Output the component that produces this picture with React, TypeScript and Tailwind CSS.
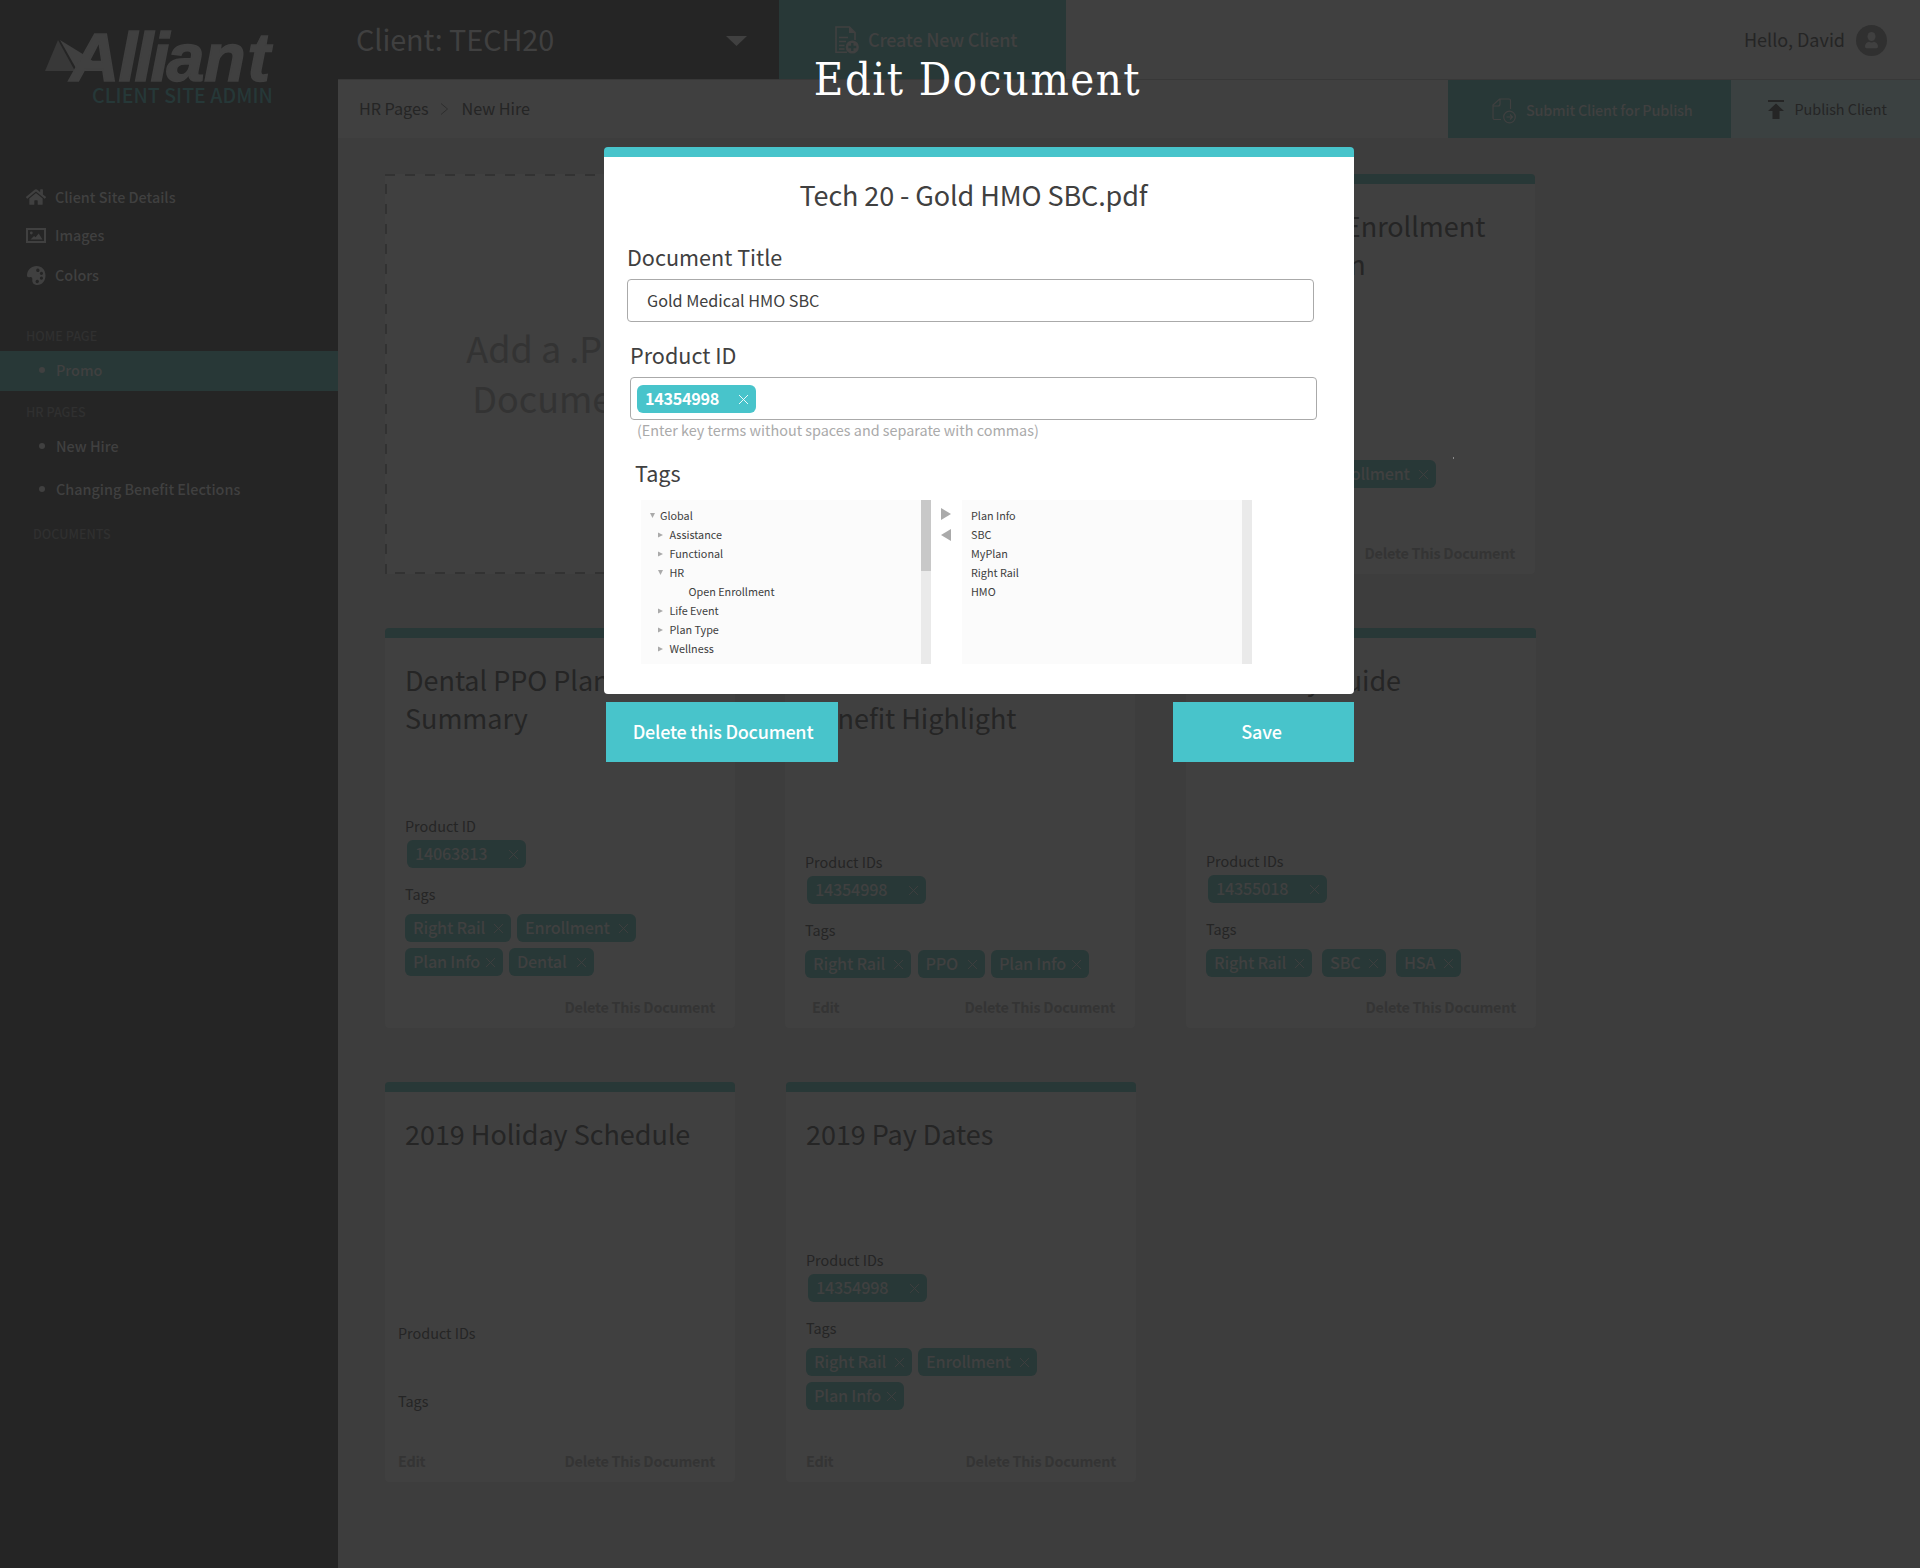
import React from "react";
import { FaHome } from "react-icons/fa";

type Chip = { label: string; width: string };

type DocCard = {
  title: string[];
  idLabel: string;
  id?: string;
  rows: Chip[][];
  edit?: string;
  metaTop: string;
  metaLeft?: string;
  gap?: string;
  offset?: string;
};

const RIGHT_RAIL: Chip = { label: "Right Rail", width: "w-[106px]" };
const ENROLLMENT: Chip = { label: "Enrollment", width: "w-[119px]" };
const PLAN_INFO: Chip = { label: "Plan Info", width: "w-[98px]" };

const CARDS: DocCard[] = [
  {
    title: ["2019 Plan", "Overview"],
    idLabel: "Product IDs",
    id: "14354998",
    rows: [[PLAN_INFO]],
    metaTop: "mt-[79px]",
  },
  {
    title: ["2019 Open Enrollment", "Presentation"],
    idLabel: "Product IDs",
    rows: [[RIGHT_RAIL, ENROLLMENT]],
    metaTop: "mt-[79px]",
  },
  {
    title: ["Dental PPO Plan", "Summary"],
    idLabel: "Product ID",
    id: "14063813",
    rows: [
      [RIGHT_RAIL, ENROLLMENT],
      [PLAN_INFO, { label: "Dental", width: "w-[85px]" }],
    ],
    metaTop: "mt-[79px]",
  },
  {
    title: ["Medical PPO", "Benefit Highlight"],
    idLabel: "Product IDs",
    id: "14354998",
    rows: [[RIGHT_RAIL, { label: "PPO", width: "w-[67px]" }, PLAN_INFO]],
    edit: "pl-[27px]",
    metaTop: "mt-[115px]",
    gap: "gap-[6.5px]",
  },
  {
    title: ["Recovery Guide"],
    idLabel: "Product IDs",
    id: "14355018",
    rows: [[RIGHT_RAIL, { label: "SBC", width: "w-[64px]" }, { label: "HSA", width: "w-[65px]" }]],
    metaTop: "mt-[114px]",
    gap: "gap-[10px]",
    offset: "ml-px",
  },
  {
    title: ["2019 Holiday Schedule"],
    idLabel: "Product IDs",
    rows: [],
    edit: "pl-[13px]",
    metaTop: "mt-[132px]",
    metaLeft: "pl-[13px]",
  },
  {
    title: ["2019 Pay Dates"],
    idLabel: "Product IDs",
    id: "14354998",
    rows: [[RIGHT_RAIL, ENROLLMENT], [PLAN_INFO]],
    edit: "pl-[20px]",
    metaTop: "mt-[59px]",
    offset: "ml-px",
  },
];

function Cross() {
  return (
    <svg className="mt-[10px] mr-[8px] h-[9px] w-[9px] shrink-0" viewBox="0 0 9 9" stroke="currentColor" strokeWidth="0.9">
      <path d="M0 0L9 9M9 0L0 9" />
    </svg>
  );
}

function DimChip({ label, width }: Chip) {
  return (
    <div className={`flex h-7 justify-between rounded-[6px] bg-[#283837] pl-2 text-[#404040] ${width}`}>
      <span className="text-[16.2px] leading-[26px] font-medium tracking-[-0.2px] whitespace-nowrap">{label}</span>
      <Cross />
    </div>
  );
}

function Card({ card }: { card: DocCard }) {
  return (
    <article
      className={`flex h-[400px] w-[350px] flex-col overflow-hidden rounded-[4px] border-t-[10px] border-[#283837] bg-[#404040] ${card.offset ?? ""}`}
    >
      <h3 className="mt-[23px] h-[76px] shrink-0 pl-[20px] text-[27px] leading-[38px] tracking-[-0.04px] whitespace-nowrap text-[#252525]">
        {card.title.map((line) => (
          <span key={line} className="block">
            {line}
          </span>
        ))}
      </h3>
      <div className={`${card.metaTop} ${card.metaLeft ?? "pl-[20px]"} text-[14.4px] leading-5 text-[#252525]`}>
        <div>{card.idLabel}</div>
        <div className="mt-1 ml-[2px] h-7">{card.id && <DimChip label={card.id} width="w-[119px]" />}</div>
        <div className="mt-4">Tags</div>
        <div className="mt-[10px] flex flex-col gap-[6px]">
          {card.rows.map((row, i) => (
            <div key={i} className={`flex ${card.gap ?? "gap-[6px]"}`}>
              {row.map((chip) => (
                <DimChip key={chip.label} {...chip} />
              ))}
            </div>
          ))}
        </div>
      </div>
      <div className="mt-auto mb-[11px] flex justify-between pr-5 text-[14.4px] leading-5 font-bold tracking-[-0.24px] text-[#343434]">
        <span className={card.edit ?? ""}>{card.edit ? "Edit" : ""}</span>
        <span>Delete This Document</span>
      </div>
    </article>
  );
}

function AddCard() {
  return (
    <div className="relative h-[400px] w-[350px] bg-[#404040] pt-[148px] text-center text-[36px] leading-[50px] text-[#333333]">
      <svg className="absolute inset-0 h-full w-full" stroke="#323232" strokeWidth="2" strokeDasharray="10 10">
        <path d="M0 1H350M1 10V400M10 399H350M349 10V400" />
      </svg>
      <span className="block pr-[7px]">Add a .PDF</span>
      <span className="block">Document</span>
    </div>
  );
}

function Logo() {
  return (
    <svg className="ml-[30px] block h-[80px] w-[280px] overflow-visible" viewBox="30 10 280 80">
      <polygon points="58,40 45,71 75,71" fill="#383838" />
      <polygon points="60,40 86,56 94,62 105,71 88,71 80,71 77,70" fill="#404040" />
      <text
        x="70 118.500 134.500 150.500 166.500 204 247.500"
        y="81"
        fill="#404040"
        stroke="#404040"
        strokeWidth="1.600"
        className="font-['Liberation_Sans',sans-serif] text-[68px] font-bold italic"
      >
        Alliant
      </text>
    </svg>
  );
}

function Bullet() {
  return <span className="mr-[11px] h-[6px] w-[6px] rounded-full bg-[#404040]" />;
}

function Sidebar() {
  return (
    <aside className="flex w-[338px] shrink-0 flex-col bg-[#252525] pt-[10px] text-[#404040]">
      <Logo />
      <div className="-mt-[9px] ml-[92px] h-7 text-[19.6px] leading-7 font-medium whitespace-nowrap text-[#263838]">CLIENT SITE ADMIN</div>
      <nav className="mt-[78px] flex flex-col text-[14.4px] leading-5 font-medium">
        <a className="flex items-center gap-[9px] pl-[26px]">
          <FaHome className="h-[20px] w-5" />
          Client Site Details
        </a>
        <a className="mt-[18px] flex items-center gap-[9px] pl-[26px]">
          <svg className="h-[15px] w-5" viewBox="0 0 20 15">
            <path d="M1 1H19V14H1Z" fill="none" stroke="currentColor" strokeWidth="2" />
            <circle cx="5.3" cy="5" r="1.4" fill="currentColor" />
            <path d="M4.500 11.500L8 8L9.500 9.200L12.700 5.500L16.500 11.500Z" fill="currentColor" />
          </svg>
          Images
        </a>
        <a className="mt-[19px] flex items-center gap-[9px] pl-[26px]">
          <svg className="mt-[2px] h-[19px] w-5" viewBox="0 0 20 19">
            <path
              fillRule="evenodd"
              fill="currentColor"
              d="M10.5 0C16 0 19.5 4 19.5 9.5C19.5 15 16 19 11.5 19C7.5 19 6 16.5 6.3 13.5C6.5 11.5 5.3 10.8 3.8 11.2C2 11.7 .8 10.8 1 8.8C1.4 3.5 5.5 0 10.5 0ZM11.8 2.6a1.7 1.7 0 1 0 .1 0ZM15.4 5.8a1.6 1.6 0 1 0 .1 0ZM15.4 10.6a1.6 1.6 0 1 0 .1 0ZM11.2 13.8a1.7 1.7 0 1 0 .1 0Z"
            />
          </svg>
          Colors
        </a>
        <div className="mt-[41px] pl-[26px] text-[12.6px] text-[#303030]">HOME PAGE</div>
        <a className="mt-[5px] flex h-10 items-center bg-[#283837] pb-[2px] pl-[39px]">
          <Bullet />
          Promo
        </a>
        <div className="mt-[11px] pl-[26px] text-[12.6px] text-[#303030]">HR PAGES</div>
        <a className="mt-[14px] flex items-center pl-[39px]">
          <Bullet />
          New Hire
        </a>
        <a className="mt-[23px] flex items-center pl-[39px]">
          <Bullet />
          Changing Benefit Elections
        </a>
        <div className="mt-[25px] pl-[33px] text-[12.6px] text-[#303030]">DOCUMENTS</div>
      </nav>
    </aside>
  );
}

function Header() {
  return (
    <header className="flex h-[79px] bg-[#404040]">
      <div className="flex w-[441px] items-center justify-between bg-[#252525] pr-[32px] pb-px pl-[18px] text-[28.8px] leading-10 tracking-[-0.08px] text-[#404040]">
        Client: TECH20
        <svg className="mt-[3px] h-[10px] w-[21px]" viewBox="0 0 21 10" fill="currentColor">
          <path d="M0 0H21L10.5 10Z" />
        </svg>
      </div>
      <div className="flex w-[287px] items-center gap-[9px] bg-[#283837] pl-[56px] text-[18px] leading-7 font-medium tracking-[-0.22px] text-[#404040]">
        <svg className="mt-px h-[28px] w-[24px]" viewBox="0 0 24 28" fill="none" stroke="currentColor" strokeWidth="1.6">
          <path d="M12 26.2H1V1H14.500L20 6.500V14M4 11.500H13M4 15.500H11M4 19.500H9.500M4 23H9.500" />
          <path d="M14 .8V7H20.500Z" fill="currentColor" stroke="none" />
          <circle cx="17.300" cy="21" r="6.600" fill="currentColor" stroke="none" />
          <path d="M17.300 17V25M13.300 21H21.300" stroke="#283837" strokeWidth="2.300" />
        </svg>
        <span className="pb-px">Create New Client</span>
      </div>
      <div className="ml-auto flex items-center gap-[11px] pr-[33px] text-[18px] leading-7 text-[#252525]">
        <span className="pb-px">Hello, David</span>
        <svg className="mt-[2px] h-[31px] w-[31px]" viewBox="0 0 31 31">
          <circle cx="15.5" cy="15.5" r="15.5" fill="#303030" />
          <ellipse cx="15.5" cy="11.5" rx="4" ry="4.5" fill="#404040" />
          <path d="M9 21.5C9 18.5 11.5 17 13 16.8Q15.500 18.200 18 16.800C19.500 17 22 18.500 22 21.500C22 22.700 21.500 23.200 20.500 23.200H10.500C9.500 23.200 9 22.700 9 21.500Z" fill="#404040" />
        </svg>
      </div>
    </header>
  );
}

function Toolbar() {
  return (
    <div className="flex h-[59px] border-t border-[#383838] bg-[#404040] text-[#252525]">
      <div className="flex pt-4 pl-[21px] text-[16.2px] leading-6 tracking-[-0.03px]">
        HR Pages
        <svg className="mt-[7px] mr-[12px] ml-[12px] h-[12px] w-[9px]" viewBox="0 0 9 12" fill="none" stroke="#2e2e2e">
          <path d="M1 .5L7.500 6L1 11.500" />
        </svg>
        New Hire
      </div>
      <div className="ml-auto flex w-[283px] items-center gap-[10px] bg-[#283837] pl-[44px] text-[14.4px] leading-5 font-medium tracking-[-0.2px] text-[#404040]">
        <svg className="mt-[3px] h-[26px] w-[24px]" viewBox="0 0 24 26" fill="none" stroke="currentColor" strokeWidth="1.200">
          <path d="M9 21.500H2.500Q1 21.500 1 20V7L7.500 1H17Q18.500 1 18.500 2.500V11M1 8H6Q8 8 8 6V1" />
          <circle cx="17.500" cy="19" r="5.800" />
          <path d="M14.500 19H20.500M18 16.500L20.500 19L18 21.500" />
        </svg>
        <span className="pt-[2px]">Submit Client for Publish</span>
      </div>
      <div className="flex w-[189px] items-center gap-[10.5px] bg-[#3b4141] pb-px pl-[37px] text-[14.4px] leading-5 tracking-[-0.03px]">
        <svg className="mt-[2px] h-[19px] w-[16px]" viewBox="0 0 16 19" fill="currentColor">
          <path d="M0 0H16V2H0ZM8 3.500L16 11H11.500V19H4.500V11H0Z" />
        </svg>
        Publish Client
      </div>
    </div>
  );
}

const TREE = [
  { label: "Global", pad: "pl-[9px] gap-[5px]", open: true },
  { label: "Assistance", pad: "pl-[17px] gap-[6.5px]", open: false },
  { label: "Functional", pad: "pl-[17px] gap-[6.5px]", open: false },
  { label: "HR", pad: "pl-[17px] gap-[6.5px]", open: true },
  { label: "Open Enrollment", pad: "pl-[36px] gap-[6.5px]", open: null },
  { label: "Life Event", pad: "pl-[17px] gap-[6.5px]", open: false },
  { label: "Plan Type", pad: "pl-[17px] gap-[6.5px]", open: false },
  { label: "Wellness", pad: "pl-[17px] gap-[6.5px]", open: false },
];

const SELECTED = ["Plan Info", "SBC", "MyPlan", "Right Rail", "HMO"];

function Caret({ open }: { open: boolean | null }) {
  return (
    <svg className="h-[6px] w-[5px]" viewBox="0 0 5 6" fill="#aaaaaa">
      {open === true && <path d="M0 0H5L2.500 5Z" />}
      {open === false && <path d="M0 .5V5.500L5 3Z" />}
    </svg>
  );
}

function TagPicker() {
  return (
    <div className="mt-3 ml-[37px] flex h-[164px] text-[10.8px] leading-[19px] text-[#404040]">
      <div className="flex w-[290px] justify-between bg-[#fbfbfb]">
        <ul className="pt-[6px]">
          {TREE.map((n) => (
            <li key={n.label} className={`flex items-center ${n.pad}`}>
              <Caret open={n.open} />
              {n.label}
            </li>
          ))}
        </ul>
        <div className="w-[10px] bg-[#eaeaea]">
          <div className="h-[71px] bg-[#c8c8c8]" />
        </div>
      </div>
      <div className="flex w-[31px] flex-col items-center gap-[9px] pt-2 pr-px">
        <svg className="h-[12px] w-[10px]" viewBox="0 0 10 12" fill="#aaaaaa">
          <path d="M0 0V12L10 6Z" />
        </svg>
        <svg className="h-[12px] w-[10px]" viewBox="0 0 10 12" fill="#aaaaaa">
          <path d="M10 0V12L0 6Z" />
        </svg>
      </div>
      <div className="flex w-[290px] justify-between bg-[#fbfbfb]">
        <ul className="pt-[6px] pl-[9px]">
          {SELECTED.map((t) => (
            <li key={t}>{t}</li>
          ))}
        </ul>
        <div className="w-[10px] bg-[#eaeaea]" />
      </div>
    </div>
  );
}

function EditDialog() {
  return (
    <div className="absolute top-0 left-[604px] w-[750px]">
      <h1 className="h-[147px] pt-[50px] pr-[3px] text-center font-['DejaVu_Serif_Condensed','DejaVu_Serif',serif] text-[45px] leading-[60px] tracking-[1.5px] whitespace-nowrap text-white">
        Edit Document
      </h1>
      <section className="h-[547px] rounded-[4px] border-t-[10px] border-[#48c4cb] bg-white text-[#404040]">
        <h2 className="pt-[19px] pr-[11px] text-center text-[27px] leading-[38px] tracking-[-0.1px]">Tech 20 - Gold HMO SBC.pdf</h2>
        <div className="mt-7 pl-[23px] text-[21.6px] leading-[30px]">Document Title</div>
        <div className="mt-[7px] ml-[23px] flex h-[43px] w-[687px] items-center rounded-[4px] border border-[#aaaaaa] pb-[2px] pl-[19px] text-[16.2px] leading-6">
          Gold Medical HMO SBC
        </div>
        <div className="mt-[18px] pl-[26px] text-[21.6px] leading-[30px]">Product ID</div>
        <div className="mt-[7px] ml-[26px] flex h-[43px] w-[687px] rounded-[4px] border border-[#aaaaaa] pt-[7px] pl-[6px]">
          <div className="flex h-7 w-[119px] justify-between rounded-[6px] bg-[#48c4cb] pl-2 text-white">
            <span className="text-[16.2px] leading-[26px] font-bold tracking-[-0.3px]">14354998</span>
            <Cross />
          </div>
        </div>
        <div className="pl-[33px] text-[14.4px] leading-5 text-[#aaaaaa]">(Enter key terms without spaces and separate with commas)</div>
        <div className="mt-[18px] pl-[31px] text-[21.6px] leading-[30px]">Tags</div>
        <TagPicker />
      </section>
      <div className="mt-2 ml-[2px] flex h-[60px] justify-between text-[18px] leading-7 font-medium tracking-[-0.22px] text-white">
        <button className="w-[232px] bg-[#48c4cb] pb-[2px] pl-[2px]">Delete this Document</button>
        <button className="w-[181px] bg-[#48c4cb] pr-[4px] pb-[2px]">Save</button>
      </div>
    </div>
  );
}

export default function App() {
  return (
    <div className="relative flex h-[1568px] w-[1920px] overflow-hidden bg-[#3d3d3d] font-['Noto_Sans_CJK_SC',sans-serif]">
      <Sidebar />
      <main className="flex flex-1 flex-col">
        <Header />
        <Toolbar />
        <div className="mt-9 ml-[47px] grid grid-cols-[350px_350px_350px] gap-x-[50px] gap-y-[54px]">
          <AddCard />
          {CARDS.map((card, i) => (
            <Card key={i} card={card} />
          ))}
        </div>
      </main>
      <span className="absolute top-[457px] left-[1453px] h-[2px] w-px bg-[#8a8a8a]" />
      <EditDialog />
    </div>
  );
}
